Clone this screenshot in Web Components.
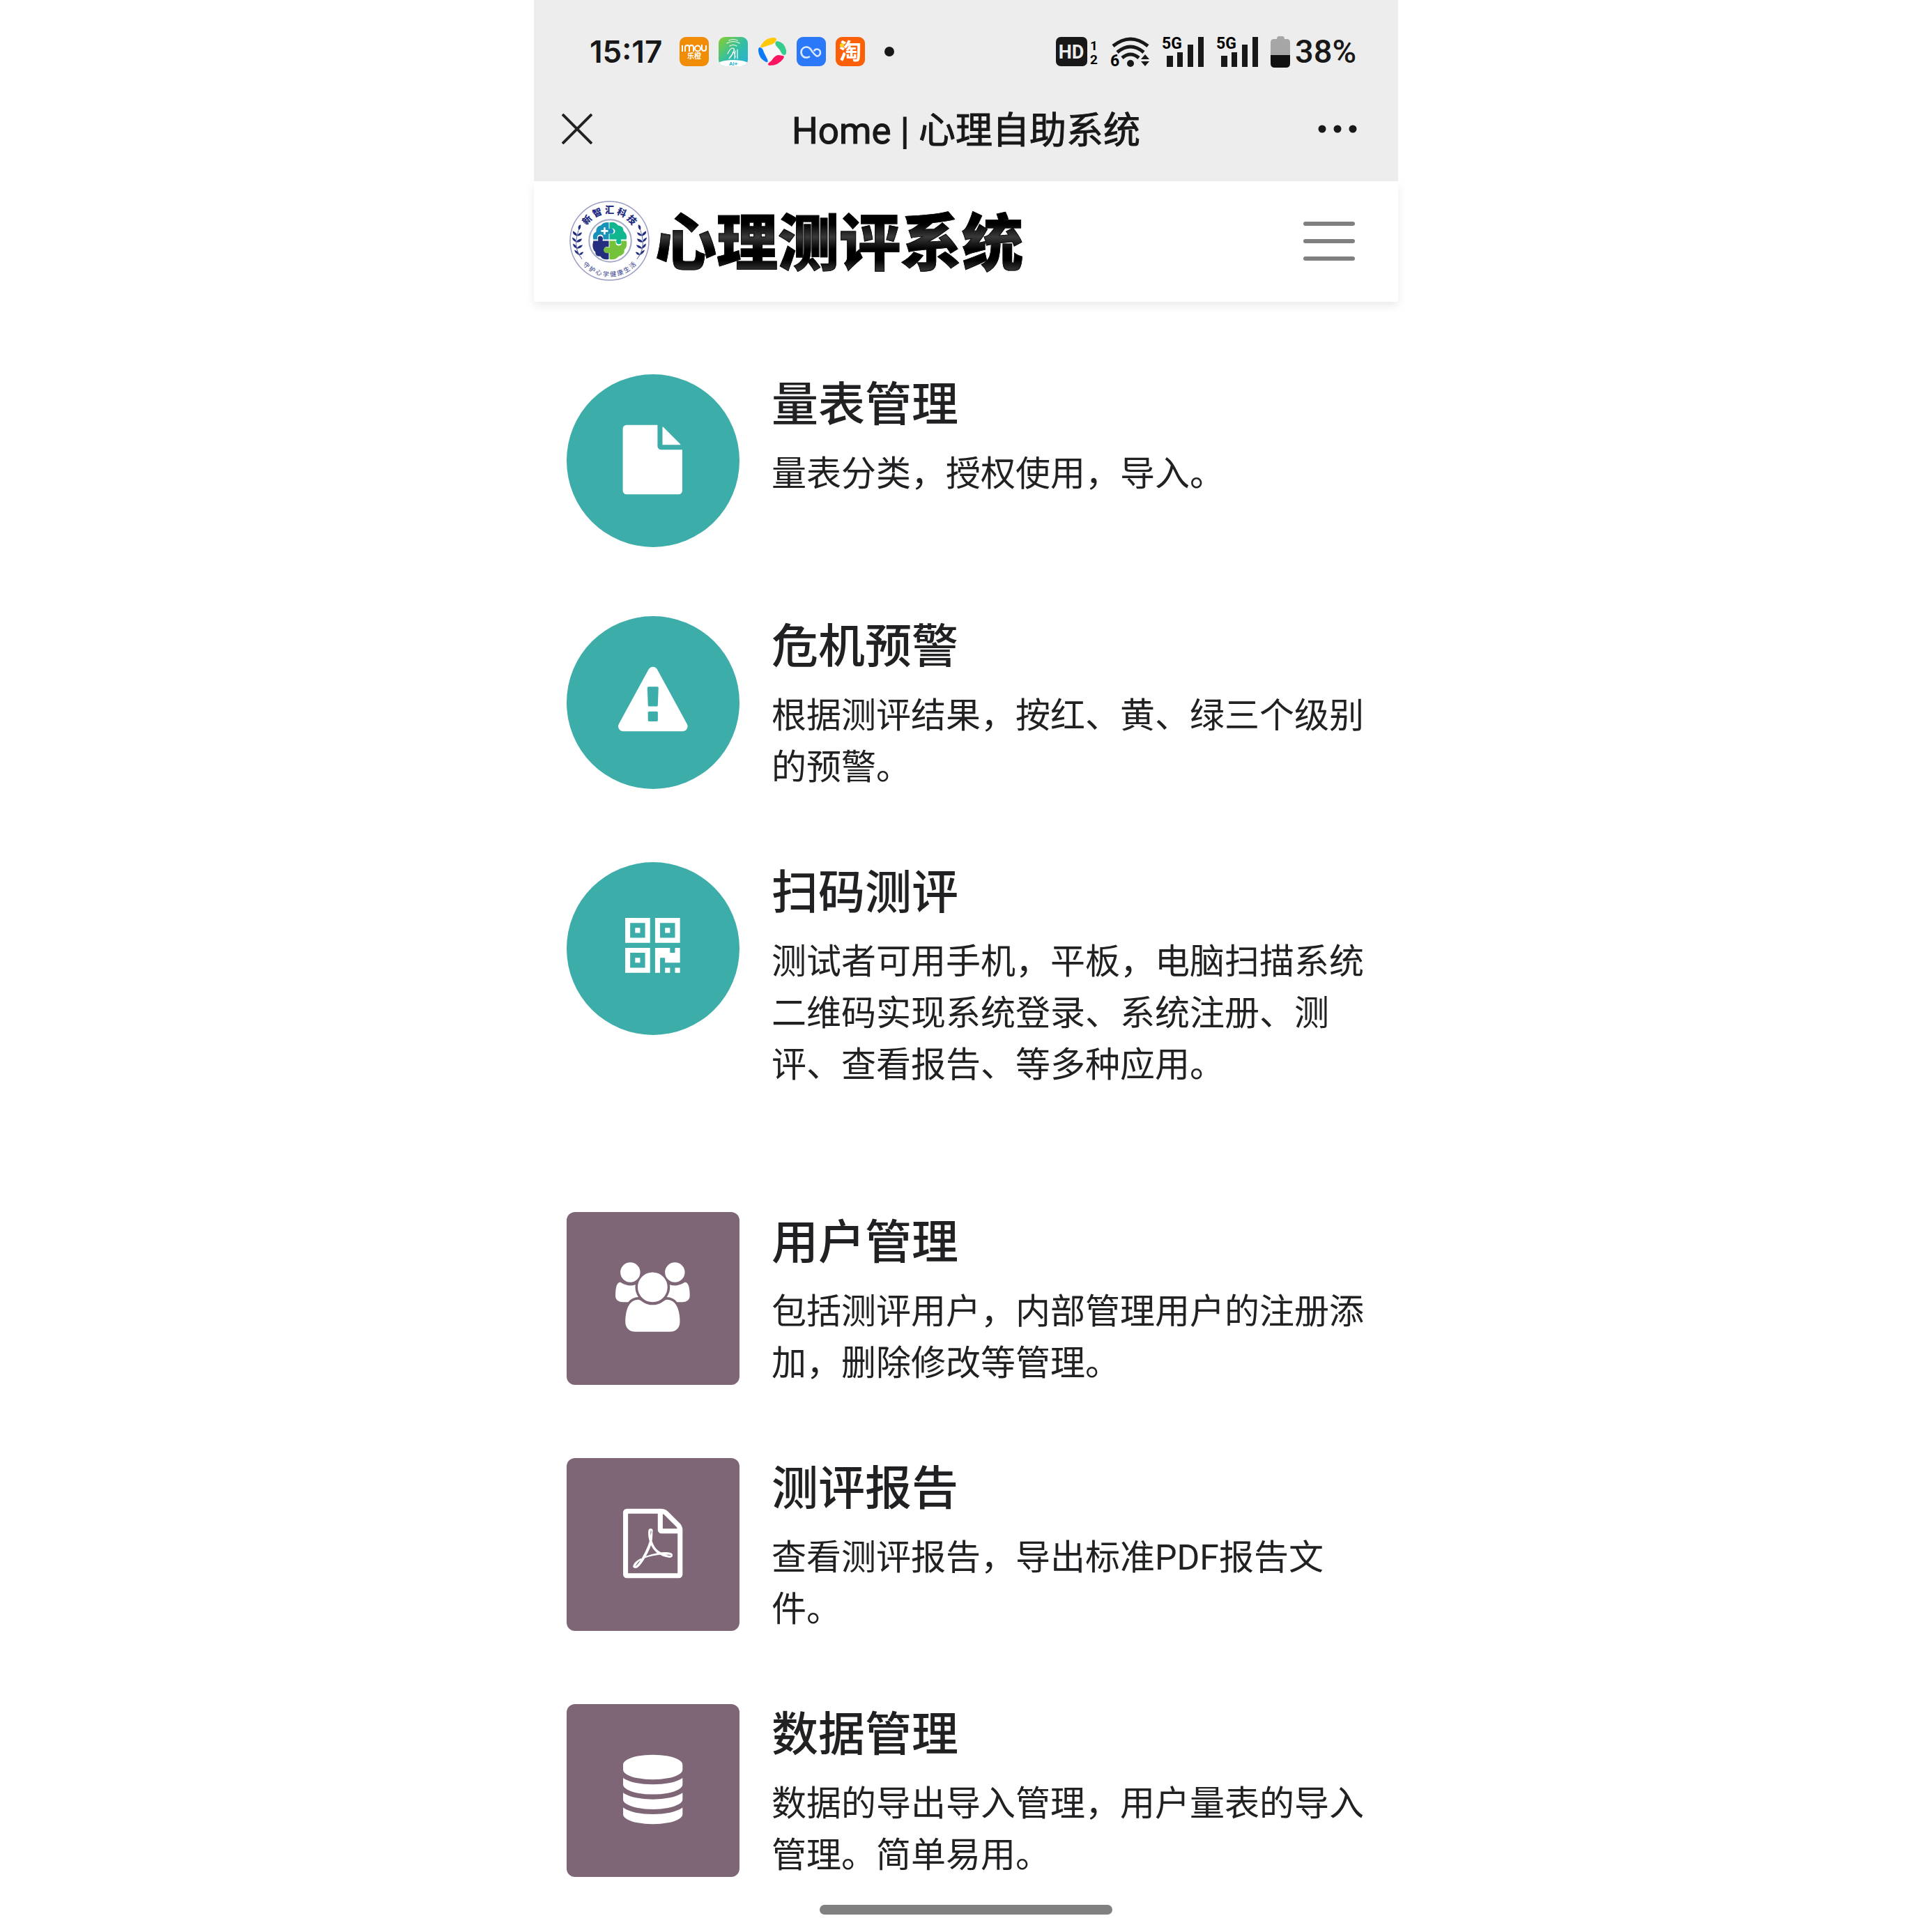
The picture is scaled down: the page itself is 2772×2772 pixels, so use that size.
<!DOCTYPE html>
<html lang="zh-CN">
<head>
<meta charset="utf-8">
<meta name="viewport" content="width=device-width, initial-scale=1">
<title>Home | 心理自助系统</title>
<style>
body { margin: 0; background: #fff; color: #212124; font-family: Roboto, "Noto Sans CJK SC", sans-serif; }
</style>
</head>
<body>
<phone-screen>
  <status-bar slot="top"></status-bar>
  <title-bar slot="top">Home | 心理自助系统</title-bar>
  <site-nav slot="nav">心理测评系统</site-nav>
  <feature-group>
    <feature-item icon="file"><span slot="title">量表管理</span>量表分类，授权使用，导入。</feature-item>
    <feature-item icon="warning"><span slot="title">危机预警</span>根据测评结果，按红、黄、绿三个级别的预警。</feature-item>
    <feature-item icon="qrcode"><span slot="title">扫码测评</span>测试者可用手机，平板，电脑扫描系统二维码实现系统登录、系统注册、测评、查看报告、等多种应用。</feature-item>
  </feature-group>
  <feature-group class="square">
    <feature-item icon="users"><span slot="title">用户管理</span>包括测评用户，内部管理用户的注册添加，删除修改等管理。</feature-item>
    <feature-item icon="pdf"><span slot="title">测评报告</span>查看测评报告，导出标准PDF报告文件。</feature-item>
    <feature-item icon="database"><span slot="title">数据管理</span>数据的导出导入管理，用户量表的导入管理。简单易用。</feature-item>
  </feature-group>
</phone-screen>

<script>
function define(name, html, setup) {
  customElements.define(name, class extends HTMLElement {
    constructor() {
      super();
      this.attachShadow({ mode: 'open' }).innerHTML = html;
    }
    connectedCallback() { if (setup) setup(this); }
  });
}

define('phone-screen', `
<style>
:host { display: block; position: relative; box-sizing: border-box; max-width: 1240px; min-height: 100vh; margin: 0 auto; background: #fff; }
header { background: #ededed; padding-bottom: 38px; }
main { display: flex; flex-direction: column; gap: 174px; padding: 104px 46px 73px 47px; }
.handle { position: absolute; left: 50%; bottom: 25px; width: 420px; height: 14px; margin-left: -210px; border-radius: 7px; background: #808080; }
</style>
<header><slot name="top"></slot></header>
<slot name="nav"></slot>
<main><slot></slot></main>
<div class="handle"></div>`);

define('status-bar', `
<style>
:host { display: flex; align-items: center; justify-content: space-between; height: 148px; padding: 0 60px 0 80px; color: #181818; }
div { display: flex; align-items: center; }
svg { display: block; flex: none; overflow: visible; }
.apps { gap: 14px; }
.time { font: 600 44px/52px Inter, sans-serif; width: 115px; }
.level { font: 500 47px/52px Roboto, sans-serif; }
.state { gap: 18px; }
.power { gap: 7px; }
text { font-family: Roboto, sans-serif; font-weight: 700; }
</style>
<div class="apps">
  <span class="time">15:17</span>
  <svg width="42" height="42" viewBox="0 0 42 42"><rect width="42" height="42" rx="9" fill="#f08c06"/>
    <g fill="none" stroke="#fff" stroke-width="2"><path d="M4 12v9M8 21v-6q0-3 3-3t3 3v6M14 15q0-3 3-3t3 3v6M32 11v6q0 3 3 3t3-3v-5"/><circle cx="26" cy="16.500" r="4"/></g>
    <text x="21" y="31" font-size="10" text-anchor="middle" fill="#fff" style="font-family:'Noto Sans CJK SC'">乐橙</text></svg>
  <svg width="42" height="42" viewBox="0 0 42 42"><defs><linearGradient id="g" x1="0" y1="0" x2="1" y2="1"><stop offset="0" stop-color="#8ccf2a"/><stop offset=".5" stop-color="#34bfa0"/><stop offset="1" stop-color="#23b0dc"/></linearGradient><clipPath id="c"><rect width="42" height="42" rx="9"/></clipPath></defs>
    <g clip-path="url(#c)"><rect width="42" height="42" fill="url(#g)"/><ellipse cx="21" cy="42" rx="26" ry="9" fill="#fff"/></g>
    <g fill="none" stroke="#fff" stroke-width="1.200" stroke-linecap="round"><path d="M15 5q6-3 12 0M12 9q9-5 18 0M16 13q5-3 10 0M13 24q4-8 7-8 5 0 0 8l-5 7M16 30q7-8 6-13M20 22q4-2 3 9M27 18v13M24 20q-1 6 0 9"/></g>
    <text x="21" y="41" font-size="8" text-anchor="middle" fill="#2ab3d0">AI+</text></svg>
  <svg width="42" height="42" viewBox="0 0 42 42"><circle cx="21" cy="21" r="14" fill="#fff" opacity=".5"/>
    <path fill="#ffc808" d="M4 14Q10 1 24 1q5 1 2 5-2 4-7 5L7 15q-3 1-3-1z"/><path fill="#36cc8e" d="M28 6q10 1 13 13 1 7-3 7-3 0-6-7L26 12q-2-5 2-6z"/><path fill="#fb1460" d="M15 40q-1-2 5-6 5-8 10-8l6 1q3 0 1 4-7 10-20 10z"/><path fill="#0c7bf5" d="M3 15q4 0 6 7l5 10q2 5-2 4Q2 31 1 20q0-5 2-5z"/></svg>
  <svg width="42" height="42" viewBox="0 0 42 42"><rect width="42" height="42" rx="9" fill="#2b78f8"/>
    <path d="M19 28q-3 2-5 1.500a7.500 7.500 0 1 1 6-12c2 3 5 8 9 10a5 5 0 1 0 0-10q-3 0-4 3" fill="none" stroke="#dbe9ff" stroke-width="2.600"/></svg>
  <svg width="42" height="42" viewBox="0 0 42 42"><rect width="42" height="42" rx="9" fill="#fb6008"/><text x="21" y="32" font-size="32" text-anchor="middle" fill="#fff" style="font-family:'Noto Sans CJK SC'">淘</text><circle cx="9" cy="12" r="3" fill="#ffd51b"/></svg>
  <svg width="42" height="42" viewBox="0 0 42 42"><circle cx="21" cy="21" r="7" fill="#181818"/></svg>
</div>
<div class="state">
  <svg width="60" height="44" viewBox="0 0 60 44"><rect y="1" width="45" height="42" rx="7" fill="#181818"/><text x="22" y="32" font-size="27" text-anchor="middle" fill="#ededed">HD</text><text x="49" y="20" font-size="19">1</text><text x="49" y="40" font-size="19">2</text></svg>
  <svg width="56" height="44" viewBox="0 0 56 44"><g fill="none" stroke="#181818" stroke-width="5"><path d="M4 14q25-20 50 0M10 23q19-16 38 0M17 31q12-10 24 0"/></g><circle cx="29" cy="39" r="5" fill="#181818"/><path d="M44 33l6-7 6 7zM44 36h12l-6 7z" fill="#181818"/><text x="0" y="43" font-size="23">6</text></svg>
  <svg width="60" height="44" viewBox="0 0 60 44"><text y="18" font-size="23">5G</text><path d="M7 28h9v16H7zM22 23h8v21h-8zM37 12h8v32h-8zM52 1h8v43h-8z" fill="#181818"/></svg>
  <svg width="60" height="44" viewBox="0 0 60 44"><text y="18" font-size="23">5G</text><path d="M7 28h9v16H7zM22 23h8v21h-8zM37 12h8v32h-8zM52 1h8v43h-8z" fill="#181818"/></svg>
  <div class="power">
    <svg width="28" height="46" viewBox="0 0 28 46"><path d="M0 29V10q0-5 5-5h4q0-4 3-4h5q3 0 3 4h3q5 0 5 5v19z" fill="#a6a6a6"/><path d="M0 28h28v12q0 6-6 6H6q-6 0-6-6z" fill="#111"/></svg>
    <span class="level">38%</span>
  </div>
</div>`);

define('title-bar', `
<style>
:host { display: grid; grid-template-columns: 1fr auto 1fr; align-items: center; height: 74px; padding: 0 59px 0 40px; color: #181818; }
h1 { margin: 0; font: 400 53px/68px Roboto, "Noto Sans CJK SC", sans-serif; -webkit-text-stroke: 1px #181818; grid-column: 2; padding: 6px 0 0 19px; }
button { border: 0; padding: 0; background: none; justify-self: start; display: block; }
button:last-child { justify-self: end; }
svg { display: block; }
</style>
<button aria-label="关闭"><svg width="44" height="44" viewBox="0 0 44 44"><path d="M1 1l42 42M43 1L1 43" stroke="#222" stroke-width="4"/></svg></button>
<h1><slot></slot></h1>
<button aria-label="更多"><svg width="56" height="12" viewBox="0 0 56 12" fill="#181818"><circle cx="6" cy="6" r="5.500"/><circle cx="28" cy="6" r="5.500"/><circle cx="50" cy="6" r="5.500"/></svg></button>`);

define('site-nav', `
<style>
:host { display: flex; align-items: center; justify-content: space-between; height: 173px; padding: 0 62px 2px 51px; box-sizing: border-box; background: #fff; box-shadow: 0 6px 12px rgba(0,0,0,.08); }
a { display: flex; align-items: center; gap: 8px; color: #050505; text-decoration: none; font: 900 88px/114px "Noto Sans CJK SC", sans-serif; }
.name { padding-bottom: 8px; color: transparent; background: linear-gradient(#000 30%, #3a3a3a 45%, #000 60%, #000 72%, #333 84%); -webkit-background-clip: text; background-clip: text; -webkit-text-stroke: 1px #111; }
svg { display: block; }
.emblem { font-family: "Noto Sans CJK SC", sans-serif; }
button { border: 0; padding: 0; background: none; }
</style>
<a href="#">
<svg class="emblem" width="115" height="115" viewBox="0 0 114 114">
  <defs><path id="up" d="M18 57a39 39 0 0 1 78 0"/><path id="down" d="M6 57a51 51 0 0 0 102 0"/></defs>
  <circle cx="57" cy="57" r="56" fill="#fff" stroke="#9a9cc4" stroke-width="1.500"/>
  <circle cx="58" cy="57" r="30" fill="none" stroke="#a4aac4" stroke-width="2"/>
  <path fill="#1791b8" d="M56 31v9q6-2 7 3 0 5-7 4v8h-8q1-7-4-7-6 1-4 7h-6q-2-8 4-11 0-8 7-9 4-5 11-4z"/>
  <path fill="#10b78e" d="M57 31q8-2 12 4 8 1 8 8 6 5 4 12h-8q3 7-3 7-5-1-3-7H57v-8q8 1 8-4-1-5-8-3z"/>
  <path fill="#24307f" d="M34 57h7q-2-7 3-7 5 1 3 7h9v9q-6-2-7 4 0 5 7 4v9q-8 2-12-4-8 0-7-6-6-5-3-16z"/>
  <path fill="#74c13a" d="M57 57h9q-1 7 4 7t4-7h7q2 8-3 13 1 7-8 9-5 6-13 4v-9q-8 2-8-4t8-3z"/>
  <path d="M50 38v10M45 43h10" stroke="#fff" stroke-width="2.500"/>
  <g id="leaf" fill="#24307f"><path d="M13 42q-2-7 3-8 1 6-3 8zM10 50q-6-2-5-7 5 2 6 6 3-4 7-4-2 6-8 5zM10 59q-6-2-6-7 5 2 6 6 3-4 8-4-2 6-8 5zM10 68q-5-2-5-7 5 2 6 6 3-4 8-4-3 6-9 5zM13 77q-5-2-6-7 6 2 7 6 3-4 6-3-2 5-7 4z"/><path d="M13 42q-7 18 0 34l5 7" fill="none" stroke="#6670aa"/></g>
  <use href="#leaf" transform="matrix(-1 0 0 1 114 0)"/>
  <text font-size="13" font-weight="900" fill="#1f2c80" text-anchor="middle"><textPath href="#up" startOffset="50%">新 智 汇 科 技</textPath></text>
  <text font-size="9" font-weight="500" fill="#5962a0" text-anchor="middle"><textPath href="#down" startOffset="50%">守 护 心 学 健 康 生 活</textPath></text>
</svg><span class="name"><slot></slot></span></a>
<button aria-label="菜单"><svg width="74" height="56" viewBox="0 0 74 56"><path d="M3 3h68M3 28h68M3 53h68" stroke="#808080" stroke-width="6" stroke-linecap="round"/></svg></button>`);

define('feature-group', `
<style>
:host { display: flex; flex-direction: column; gap: 99px; --tile: #3dadaa; --tile-radius: 50%; }
:host(.square) { --tile: #7e6677; --tile-radius: 12px; }
</style><slot></slot>`);

const S = 'scale(.05556)';
const icons = {
  file: `<path transform="translate(73.500 72.700) ${S}" d="M1152 512V40q22 14 36 28l408 408q14 14 28 36h-472zm-128 32q0 40 28 68t68 28h544v1056q0 40-28 68t-68 28H224q-40 0-68-28t-28-68V96q0-40 28-68t68-28h800v544z"/>`,
  warning: `<path transform="translate(74 72.700) ${S}" d="M1024 1375v-190q0-14-9.500-23.500T992 1152H800q-13 0-22.500 9.500T768 1185v190q0 14 9.500 23.500t22.500 9.500h192q13 0 22.500-9.500t9.500-23.500zm-2-374l18-459q0-12-10-19-13-11-24-11H786q-11 0-24 11-10 7-10 21l17 457q0 10 10 16.500t24 6.500h185q14 0 23.500-6.500t10.500-16.500zm-14-934l768 1408q35 63-2 126-17 29-46.500 46t-63.500 17H128q-34 0-63.500-17T18 1601q-37-63-2-126L784 67q17-31 47-49t65-18 65 18 47 49z"/>`,
  qrcode: `<path transform="translate(84 80) scale(7.150)" fill-rule="evenodd" d="M0 0h5v5H0zM1 1v3h3V1zM2 2h1v1H2zM6 0h5v5H6zM7 1v3h3V1zM8 2h1v1H8zM0 6h5v5H0zM1 7v3h3V7zM2 8h1v1H2zM6 6h3v1h1V6h1v3H8V8H7v3H6zM8 10h1v1H8zM10 10h1v1h-1z"/>`,
  users: `<path transform="translate(70 72.300) ${S}" d="M593 896q-162 5-265 128H194q-82 0-138-40.500T0 865q0-353 124-353 6 0 43.500 21t97.500 42.500T384 597q67 0 133-23-5 37-5 66 0 139 81 256zm1071 637q0 120-73 189.500t-194 69.500H523q-121 0-194-69.500T256 1533q0-53 3.500-103.500t14-109T300 1212t43-97.500 62-81 85.500-53.500T602 960q10 0 43 21.500t73 48 107 48 135 21.500 135-21.500 107-48 73-48 43-21.500q61 0 111.500 20t85.500 53.500 62 81 43 97.500 26.500 108.500 14 109 3.500 103.500zM640 256q0 106-75 181t-181 75-181-75-75-181 75-181T384 0t181 75 75 181zm704 384q0 159-112.500 271.500T960 1024 688.500 911.500 576 640t112.500-271.500T960 256t271.500 112.500T1344 640zm576 225q0 78-56 118.500t-138 40.500h-134q-103-123-265-128 81-117 81-256 0-29-5-66 66 23 133 23 59 0 119-21.500t97.500-42.500 43.500-21q124 0 124 353zm-128-609q0 106-75 181t-181 75-181-75-75-181 75-181 181-75 181 75 75 181z"/>`,
  pdf: `<path transform="translate(81 72.700) ${S}" d="M1468 380q28 28 48 76t20 88v1152q0 40-28 68t-68 28H96q-40 0-68-28t-28-68V96q0-40 28-68T96 0h896q40 0 88 20t76 48zm-444-244v376h376q-10-29-22-41l-313-313q-12-12-41-22zm384 1528V640H992q-40 0-68-28t-28-68V128H128v1536h1280zm-514-593q33 26 84 56 59-7 117-7 147 0 177 49 16 22 2 52 0 1-1 2l-2 2v1q-6 38-71 38-48 0-115-20t-130-53q-221 24-392 83-153 262-242 262-15 0-28-7l-24-12q-1-1-6-5-10-10-6-36 9-40 56-91.500t132-96.500q14-9 23 6 2 2 2 4 52-85 107-197 68-136 104-262-24-82-30.500-159.500T657 552q11-40 42-40h22q23 0 35 15 18 21 9 68-2 6-4 8 1 3 1 8v30q-2 123-14 192 55 164 146 238zm-576 411q52-24 137-158-51 40-87.500 84t-49.500 74zm398-920q-15 42-2 132 1-7 7-44 0-3 7-43 1-4 4-8-1-1-1-2-1-2-1-3-1-22-13-36 0 1-1 2v2zm-124 661q135-54 284-81-2-1-13-9.500t-16-13.500q-76-67-127-176-27 86-83 197-30 56-45 83zm646-16q-24-24-140-24 76 28 124 28 14 0 18-1 0-1-2-3z"/>`,
  database: `<path transform="translate(81 72.700) ${S}" d="M768 768q237 0 443-43t325-127v170q0 69-103 128t-280 93.500-385 34.500-385-34.500T103 896 0 768V598q119 84 325 127t443 43zm0 768q237 0 443-43t325-127v170q0 69-103 128t-280 93.500-385 34.500-385-34.500-280-93.500T0 1536v-170q119 84 325 127t443 43zm0-384q237 0 443-43t325-127v170q0 69-103 128t-280 93.500-385 34.500-385-34.500-280-93.500T0 1152V982q119 84 325 127t443 43zM768 0q208 0 385 34.500t280 93.500 103 128v128q0 69-103 128t-280 93.500T768 640t-385-34.500T103 512 0 384V256q0-69 103-128t280-93.500T768 0z"/>`
};

define('feature-item', `
<style>
:host { display: flex; align-items: flex-start; gap: 46px; }
.tile { flex: none; width: 248px; height: 248px; border-radius: var(--tile-radius); background: var(--tile); }
.tile svg { display: block; width: 100%; height: 100%; fill: #fff; }
.body { flex: 1; min-width: 0; }
h2 { margin: 0 0 18px; font-size: 67px; line-height: 88px; font-weight: 500; }
p { margin: 0; font-size: 50px; line-height: 74px; }
</style>
<div class="tile"><svg viewBox="0 0 248 248" aria-hidden="true"></svg></div>
<div class="body"><h2><slot name="title"></slot></h2><p><slot></slot></p></div>`,
  el => { el.shadowRoot.querySelector('svg').innerHTML = icons[el.getAttribute('icon')]; });
</script>
</body>
</html>
